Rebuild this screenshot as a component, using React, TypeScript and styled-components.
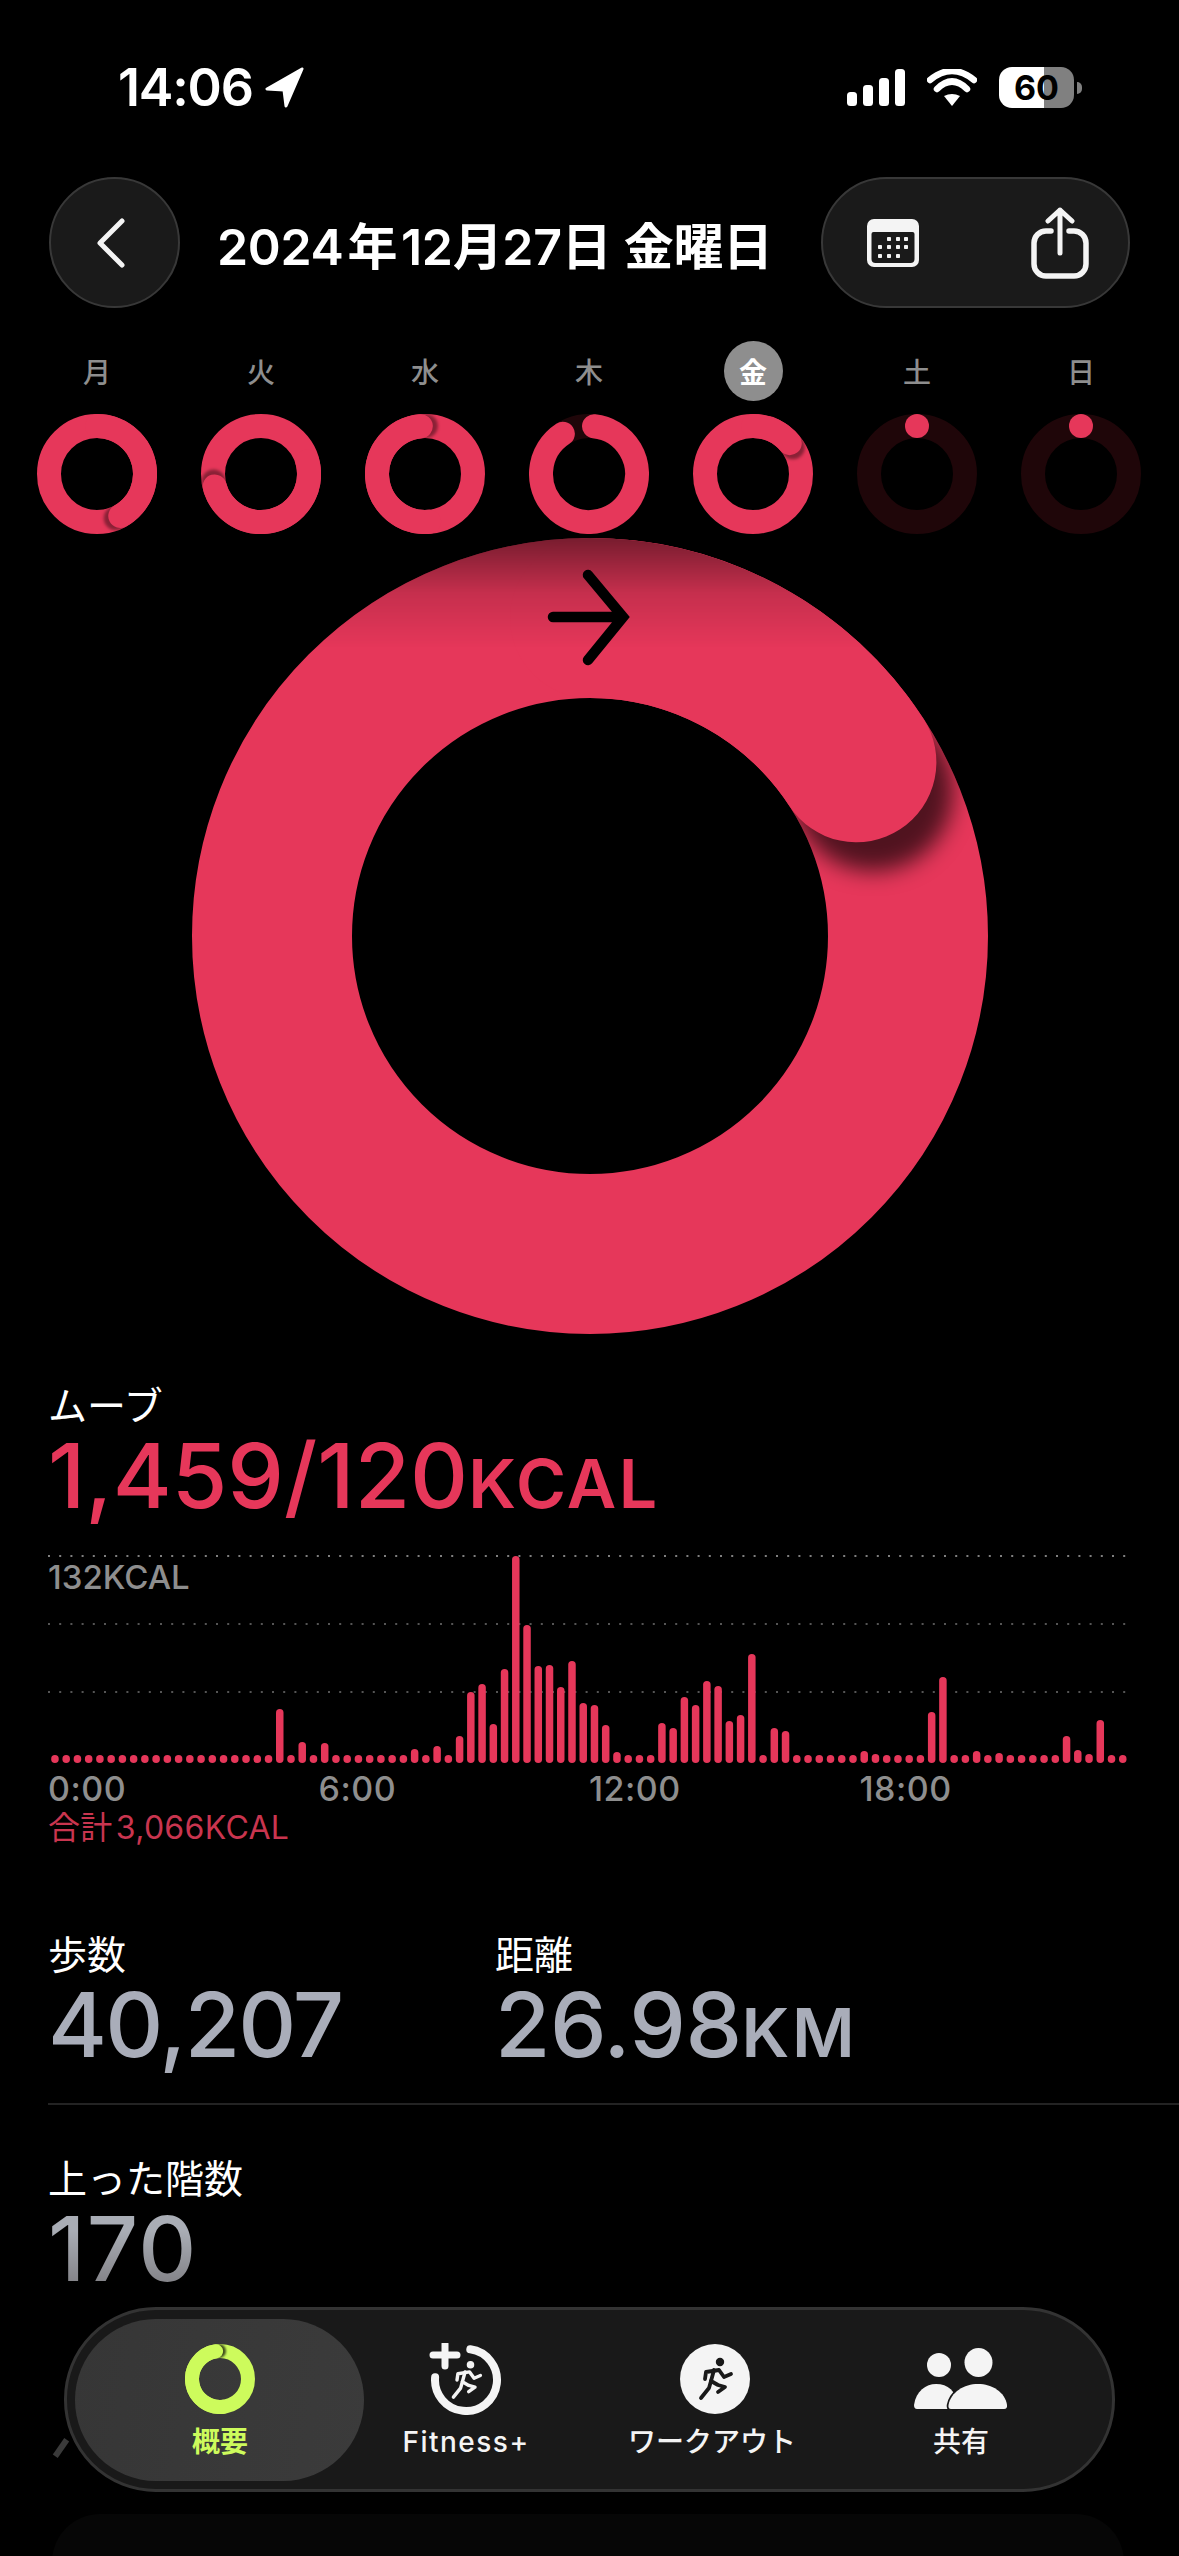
import React from "react";
import styled, { createGlobalStyle } from "styled-components";

const RED = "#e6375a";
const SANS = `Inter, "Noto Sans CJK JP", sans-serif`;

const GlobalStyle = createGlobalStyle`
  html, body {
    margin: 0;
    padding: 0;
    background: #000;
  }
`;

const Page = styled.div`
  position: relative;
  width: 1179px;
  height: 2556px;
  overflow: hidden;
  padding-top: 67px;
  box-sizing: border-box;
  background: #000;
  color: #fff;
  font-family: ${SANS};
`;

const StatusBar = styled.div`
  display: flex;
  justify-content: space-between;
  align-items: center;
  height: 41px;
  padding: 0 97px 0 118px;
`;

const StatusGroup = styled.div`
  display: flex;
  align-items: center;
  gap: ${(p: { $gap: number }) => p.$gap}px;
`;

const Clock = styled.span`
  font-size: 52px;
  font-weight: 600;
  line-height: 41px;
  letter-spacing: -1.2px;
`;

const Battery = styled.div`
  display: flex;
  align-items: center;
  justify-content: center;
  width: 75px;
  height: 41px;
  border-radius: 13px;
  background: linear-gradient(90deg, #fff 60%, #808080 60%);
  color: #000;
  font-size: 34px;
  font-weight: 700;
`;

const BatteryNub = styled.div`
  width: 5px;
  height: 12px;
  margin-left: -13px;
  border-radius: 0 6px 6px 0;
  background: #808080;
`;

const Header = styled.div`
  display: flex;
  align-items: center;
  margin-top: 69px;
  padding: 0 49px;
  height: 131px;
`;

const GlassButton = styled.button`
  display: flex;
  align-items: center;
  flex: none;
  height: 131px;
  box-sizing: border-box;
  padding: 0;
  background: #1a1a1a;
  border: 2px solid #383838;
  border-radius: 66px;
`;

const BackButton = styled(GlassButton)`
  width: 131px;
  justify-content: center;
  padding-right: 8px;
`;

const ActionsButton = styled(GlassButton)`
  width: 309px;
  justify-content: space-between;
  padding: 0 39px 0 44px;
`;

const Title = styled.h1`
  flex: 1;
  margin: 0 0 0 37px;
  font-size: 50px;
  font-weight: 600;
  letter-spacing: -0.3px;
  white-space: nowrap;
`;

const Week = styled.div`
  display: grid;
  grid-template-columns: repeat(7, 164px);
  margin-top: 33px;
  padding-left: 15px;
`;

const Day = styled.div`
  display: flex;
  flex-direction: column;
  align-items: center;
  gap: 13px;
`;

const DayLabel = styled.span<{ $active?: boolean }>`
  display: flex;
  align-items: center;
  justify-content: center;
  width: 59px;
  height: 60px;
  border-radius: 50%;
  background: ${(p) => (p.$active ? "#8e8e8e" : "transparent")};
  color: ${(p) => (p.$active ? "#fff" : "#8e8e8e")};
  font-size: 28px;
  font-weight: ${(p) => (p.$active ? 700 : 500)};
`;

const Hero = styled.div`
  display: flex;
  justify-content: center;
  margin-top: 4px;
`;

const Section = styled.section`
  padding-left: 48px;
`;

const MoveSection = styled(Section)`
  margin-top: 50px;
`;

const Label = styled.div`
  font-size: 39px;
  font-weight: 400;
  line-height: 44px;
  color: #fff;
`;

const Value = styled.div<{ $color?: string; $faded?: boolean; $tracking?: number }>`
  margin-top: 2px;
  font-size: 90px;
  font-weight: 500;
  line-height: 92px;
  letter-spacing: ${(p) => p.$tracking ?? 0}px;
  white-space: nowrap;
  color: ${(p) => p.$color ?? "#a9adb9"};
  ${(p) =>
    p.$faded &&
    `
    width: max-content;
    background: linear-gradient(180deg, #a9adb5 30%, #85858a 85%);
    -webkit-background-clip: text;
    background-clip: text;
    color: transparent;
  `}
`;

const Unit = styled.span`
  font-size: 68px;
  font-weight: 600;
  letter-spacing: 2.5px;
`;

const ChartBox = styled.div`
  position: relative;
  width: 1083px;
  height: 212px;
  margin-top: 25px;
`;

const PeakLabel = styled.span`
  position: absolute;
  left: 0;
  top: 3px;
  color: #8e8e8e;
  font-size: 33px;
  font-weight: 500;
`;

const Axis = styled.div`
  display: grid;
  grid-template-columns: repeat(4, 270.5px);
  margin-top: 3px;
  color: #8e8e8e;
  font-size: 34px;
  font-weight: 500;
  letter-spacing: 0.5px;
  line-height: 40px;
`;

const Total = styled.div`
  margin-top: -1px;
  color: #c9354f;
  font-size: 32px;
  letter-spacing: 0.3px;
  line-height: 40px;
`;

const StatsRow = styled(Section)`
  display: flex;
  margin-top: 85px;
`;

const Stat = styled.div<{ $width?: number }>`
  width: ${(p) => (p.$width ? `${p.$width}px` : "auto")};
`;

const Divider = styled.div`
  height: 2px;
  margin: 25px 0 0 48px;
  background: #232323;
`;

const ClimbSection = styled(Section)`
  margin-top: 52px;
`;

const NextCard = styled.div`
  height: 300px;
  margin: 219px 55px 0 52px;
  border-radius: 48px;
  background: #060606;
`;

const TabBar = styled.nav`
  position: absolute;
  left: 64px;
  top: 2307px;
  display: grid;
  grid-template-columns: 246px 246px 246px 252px;
  box-sizing: border-box;
  width: 1051px;
  height: 185px;
  padding: 0 30px;
  background: #191919;
  border: 3px solid #333;
  border-radius: 92px;

  &::after {
    content: "";
    position: absolute;
    left: -9px;
    top: 128px;
    width: 6px;
    height: 20px;
    background: #3a3a3a;
    transform: rotate(35deg);
  }
`;

const Tab = styled.div<{ $active?: boolean }>`
  position: relative;
  display: flex;
  flex-direction: column;
  align-items: center;
  padding-top: 34px;
  color: ${(p) => (p.$active ? "#cdfb5c" : "#f4f4f4")};
  font-size: 28px;
  font-weight: ${(p) => (p.$active ? 700 : 500)};

  ${(p) =>
    p.$active &&
    `
    &::before {
      content: "";
      position: absolute;
      left: -22px;
      top: 9px;
      width: 289px;
      height: 162px;
      border-radius: 81px;
      background: linear-gradient(100deg, #363636, #3b3b3b);
    }
  `}
`;

const TabIcon = styled.div<{ $nudge?: number }>`
  position: relative;
  display: flex;
  justify-content: center;
  align-items: center;
  height: 70px;
  margin-left: ${(p) => p.$nudge ?? 0}px;
`;

const TabLabel = styled.span<{ $tracking?: number }>`
  position: relative;
  margin-top: 11px;
  line-height: 34px;
  letter-spacing: ${(p) => p.$tracking ?? 0}px;
  white-space: nowrap;
`;

// 15 minute buckets, anything not listed is just the little dot
const PEAKS: Record<number, number> = {
  20: 54, 22: 21, 24: 20, 32: 14, 34: 17, 36: 27, 37: 71, 38: 79, 39: 39, 40: 94,
  41: 207, 42: 138, 43: 97, 44: 98, 45: 76, 46: 102, 47: 60, 48: 58, 49: 38, 50: 11,
  54: 40, 55: 35, 56: 66, 57: 58, 58: 82, 59: 77, 60: 42, 61: 48, 62: 109, 64: 35,
  65: 32, 72: 12, 73: 9, 78: 51, 79: 86, 82: 12, 84: 10, 90: 27, 91: 13, 92: 9, 93: 43,
};
const BARS = Array.from({ length: 96 }, (_, i) => PEAKS[i] ?? 8);

const polar = (r: number, deg: number) => {
  const rad = ((deg - 90) * Math.PI) / 180;
  return [r * Math.cos(rad), r * Math.sin(rad)];
};

const arc = (r: number, from: number, to: number) => {
  const [x0, y0] = polar(r, from);
  const [x1, y1] = polar(r, to);
  return `M${x0} ${y0}A${r} ${r} 0 ${to - from > 180 ? 1 : 0} 1 ${x1} ${y1}`;
};

type RingProps = {
  id: string;
  r: number;
  w: number;
  cap: number;
  from?: number;
  color?: string;
  track?: string;
  closed?: boolean;
  shade?: boolean;
  shadow?: number;
  children?: React.ReactNode;
};

const Ring = ({ id, r, w, cap, from = 0, color = RED, track, closed, shade, shadow = 0.5, children }: RingProps) => {
  const R = r + w / 2;
  const [sx, sy] = polar(r, cap + 6);
  // only the tail end sits over the shadow, otherwise the arc's own start would hide it
  const tail = closed ? Math.max(from, cap - 180) : from;
  return (
    <svg width={R * 2} height={R * 2} viewBox={`${-R} ${-R} ${R * 2} ${R * 2}`}>
      <defs>
        <mask id={`${id}-m`} maskUnits="userSpaceOnUse" x={-R} y={-R} width={R * 2} height={R * 2}>
          <circle r={r} fill="none" stroke="#fff" strokeWidth={w} />
        </mask>
        <filter id={`${id}-b`} x="-50%" y="-50%" width="200%" height="200%">
          <feGaussianBlur stdDeviation={w * 0.07} />
        </filter>
        <linearGradient id={`${id}-g`} x1="0" y1="0" x2="0" y2="1">
          <stop offset="0" stopColor="#000" stopOpacity="0.48" />
          <stop offset="0.5" stopColor="#000" stopOpacity="0.14" />
          <stop offset="1" stopColor="#000" stopOpacity="0" />
        </linearGradient>
      </defs>
      {track && <circle r={r} fill="none" stroke={track} strokeWidth={w} />}
      {closed && <circle r={r} fill="none" stroke={color} strokeWidth={w} />}
      {closed && (
        <g mask={`url(#${id}-m)`}>
          <circle cx={sx} cy={sy} r={w / 2} fill="#000" fillOpacity={shadow} filter={`url(#${id}-b)`} />
        </g>
      )}
      {cap === from ? (
        <circle cx={polar(r, cap)[0]} cy={polar(r, cap)[1]} r={w / 2} fill={color} />
      ) : (
        <path d={arc(r, tail, cap)} fill="none" stroke={color} strokeWidth={w} strokeLinecap="round" />
      )}
      {shade && (
        <g mask={`url(#${id}-m)`}>
          <rect x={-R} y={-R} width={R * 2} height={110} fill={`url(#${id}-g)`} />
        </g>
      )}
      {children}
    </svg>
  );
};

const LocationIcon = () => (
  <svg width="40" height="41" viewBox="0 0 40 41">
    <path d="M37 2 L2 22 L19 23 L21 39 Z" fill="#fff" stroke="#fff" strokeWidth="3" strokeLinejoin="round" />
  </svg>
);

const SignalIcon = () => (
  <svg width="58" height="38" viewBox="0 0 58 38">
    <rect x="0" y="23" width="10" height="14" rx="3.5" fill="#fff" />
    <rect x="16" y="16" width="10" height="21" rx="3.5" fill="#fff" />
    <rect x="32" y="9" width="10" height="28" rx="3.5" fill="#fff" />
    <rect x="48" y="0" width="10" height="37" rx="3.5" fill="#fff" />
  </svg>
);

const WifiIcon = () => (
  <svg width="50" height="38" viewBox="0 0 50 38">
    <path d="M3 11 Q25 -7 47 11" fill="none" stroke="#fff" strokeWidth="6.5" strokeLinecap="round" />
    <path d="M10 20 Q25 5 40 20" fill="none" stroke="#fff" strokeWidth="6.5" strokeLinecap="round" />
    <path d="M17 27 Q25 23 33 27 L25 37 Z" fill="#fff" />
  </svg>
);

const ChevronIcon = () => (
  <svg width="30" height="50" viewBox="0 0 30 50">
    <path d="M26 3 L4 25 L26 47" fill="none" stroke="#f4f4f4" strokeWidth="5" strokeLinecap="round" strokeLinejoin="round" />
  </svg>
);

const CALENDAR_DOTS = [
  [22, 20], [31, 20], [39, 20],
  [13, 28], [22, 28], [31, 28], [39, 28],
  [13, 37], [22, 37], [31, 37],
];

const CalendarIcon = () => (
  <svg width="52" height="48" viewBox="0 0 52 48">
    <rect width="52" height="48" rx="7" fill="#f4f4f4" />
    <path d="M4.5 15 a2 2 0 0 1 2 -2 h39 a2 2 0 0 1 2 2 v25 a4 4 0 0 1 -4 4 h-35 a4 4 0 0 1 -4 -4 Z" fill="#1a1a1a" />
    {CALENDAR_DOTS.map(([x, y]) => (
      <rect key={`${x}-${y}`} x={x - 2} y={y - 2} width="4" height="4" rx="0.8" fill="#f4f4f4" />
    ))}
  </svg>
);

const ShareIcon = () => (
  <svg width="58" height="72" viewBox="0 0 58 72">
    <path
      d="M20 24 H15 a12 12 0 0 0 -12 12 V57 a12 12 0 0 0 12 12 H43 a12 12 0 0 0 12 -12 V36 a12 12 0 0 0 -12 -12 H38"
      fill="none"
      stroke="#f4f4f4"
      strokeWidth="5.5"
      strokeLinecap="round"
    />
    <path d="M29 46 V3 M17 14 L29 3 L41 14" fill="none" stroke="#f4f4f4" strokeWidth="5" strokeLinecap="round" strokeLinejoin="round" />
  </svg>
);

// drawn on a 70 x 70 box
const Runner = ({ color, scale = 1 }: { color: string; scale?: number }) => (
  <g
    transform={`translate(35 35) scale(${scale}) translate(-35 -35)`}
    fill="none"
    stroke={color}
    strokeWidth="3.8"
    strokeLinecap="round"
    strokeLinejoin="round"
  >
    <circle cx="40" cy="18" r="3.4" fill={color} strokeWidth="1.6" />
    <path d="M25 35 L26 28 L39 26 L44 33 L51 30" />
    <path d="M34 26 L31 37 L38 41 L45 43 L38 48" />
    <path d="M31 37 L29 44 L21 54" />
  </g>
);

const FitnessIcon = () => (
  <svg width="80" height="72" viewBox="0 0 80 72">
    <g transform="translate(5 2)">
      <path d={`M${35 + polar(31, 8)[0]} ${35 + polar(31, 8)[1]}A31 31 0 1 1 ${35 + polar(31, 275)[0]} ${35 + polar(31, 275)[1]}`} fill="none" stroke="#f4f4f4" strokeWidth="8" strokeLinecap="round" />
      <Runner color="#f4f4f4" scale={0.9} />
    </g>
    <path d="M7 12 H31 M19 1 V23" fill="none" stroke="#f4f4f4" strokeWidth="7" strokeLinecap="round" />
  </svg>
);

const WorkoutIcon = () => (
  <svg width="70" height="70" viewBox="0 0 70 70">
    <circle cx="35" cy="35" r="35" fill="#f4f4f4" />
    <Runner color="#191919" />
  </svg>
);

const PeopleIcon = () => (
  <svg width="94" height="62" viewBox="0 0 94 62">
    <circle cx="25" cy="17" r="12" fill="#f4f4f4" />
    <ellipse cx="64.5" cy="14.5" rx="14" ry="14.5" fill="#f4f4f4" />
    <path d="M3 61 Q0 61 0 57 C2 43 12 36 22 36 C34 36 42 43 44 57 Q44 61 41 61 Z" fill="#f4f4f4" />
    <path
      d="M37 61 Q34 61 34.5 57 C37 44 50 36 64 36 C78 36 91 44 93 57 Q93.5 61 90 61 Z"
      fill="#f4f4f4"
      stroke="#191919"
      strokeWidth="3.5"
      paintOrder="stroke"
    />
  </svg>
);

const MoveChart = () => (
  <ChartBox>
    <svg width="1083" height="212" viewBox="0 0 1083 212">
      {[2, 70, 138].map((y, i) => (
        <line key={y} x1="0" x2="1083" y1={y} y2={y} stroke={i === 0 ? "#808080" : "#555"} strokeWidth="2" strokeDasharray="2 9.2" />
      ))}
      {BARS.map((h, i) => (
        <rect key={i} x={3.2 + i * 11.24} y={209 - h} width="7.5" height={h} rx="3.75" fill={RED} />
      ))}
    </svg>
    <PeakLabel>132KCAL</PeakLabel>
  </ChartBox>
);

const WEEK = [
  { label: "月", cap: 151 },
  { label: "火", cap: 255 },
  { label: "水", cap: 355 },
  { label: "木", cap: 327, from: 6, open: true },
  { label: "金", cap: 50, active: true },
  { label: "土", cap: 0, empty: true },
  { label: "日", cap: 0, empty: true },
];

const App = () => (
  <Page>
    <GlobalStyle />
    <StatusBar>
      <StatusGroup $gap={12}>
        <Clock>14:06</Clock>
        <LocationIcon />
      </StatusGroup>
      <StatusGroup $gap={22}>
        <SignalIcon />
        <WifiIcon />
        <StatusGroup $gap={16}>
          <Battery>60</Battery>
          <BatteryNub />
        </StatusGroup>
      </StatusGroup>
    </StatusBar>

    <Header>
      <BackButton>
        <ChevronIcon />
      </BackButton>
      <Title>2024{"\u200a"}年{"\u200a"}12月27日 金曜日</Title>
      <ActionsButton>
        <CalendarIcon />
        <ShareIcon />
      </ActionsButton>
    </Header>

    <Week>
      {WEEK.map((d) => (
        <Day key={d.label}>
          <DayLabel $active={d.active}>{d.label}</DayLabel>
          <Ring
            id={`day-${d.label}`}
            r={48}
            w={24}
            cap={d.cap}
            from={d.from}
            closed={!d.open && !d.empty}
            track={d.open || d.empty ? "#1f0609" : undefined}
            shadow={0.4}
          />
        </Day>
      ))}
    </Week>

    <Hero>
      <Ring id="hero" r={318} w={160} cap={56.9} closed shade shadow={0.65}>
        <path
          d="M-37 -319 H33 M-2 -361 L33 -319 L-2 -276"
          fill="none"
          stroke="#000"
          strokeWidth="10.5"
          strokeLinecap="round"
          strokeLinejoin="miter"
        />
      </Ring>
    </Hero>

    <MoveSection>
      <Label>ムーブ</Label>
      <Value $color={RED}>
        1,459/120<Unit>KCAL</Unit>
      </Value>
      <MoveChart />
      <Axis>
        <span>0:00</span>
        <span>6:00</span>
        <span>12:00</span>
        <span>18:00</span>
      </Axis>
      <Total>合計{"\u200a"}3,066KCAL</Total>
    </MoveSection>

    <StatsRow>
      <Stat $width={447}>
        <Label>歩数</Label>
        <Value $tracking={-1.8}>40,207</Value>
      </Stat>
      <Stat>
        <Label>距離</Label>
        <Value $tracking={-0.5}>
          26.98<Unit>KM</Unit>
        </Value>
      </Stat>
    </StatsRow>
    <Divider />
    <ClimbSection>
      <Label>上った階数</Label>
      <Value $faded $tracking={1.5}>170</Value>
    </ClimbSection>
    <NextCard />

    <TabBar>
      <Tab $active>
        <TabIcon>
          <Ring id="summary" r={28} w={14} cap={352} color="#cdfb5c" closed shadow={0.7} />
        </TabIcon>
        <TabLabel>概要</TabLabel>
      </Tab>
      <Tab>
        <TabIcon>
          <FitnessIcon />
        </TabIcon>
        <TabLabel $tracking={1.5}>Fitness+</TabLabel>
      </Tab>
      <Tab>
        <TabIcon $nudge={5}>
          <WorkoutIcon />
        </TabIcon>
        <TabLabel>ワークアウト</TabLabel>
      </Tab>
      <Tab>
        <TabIcon>
          <PeopleIcon />
        </TabIcon>
        <TabLabel>共有</TabLabel>
      </Tab>
    </TabBar>
  </Page>
);

export default App;
